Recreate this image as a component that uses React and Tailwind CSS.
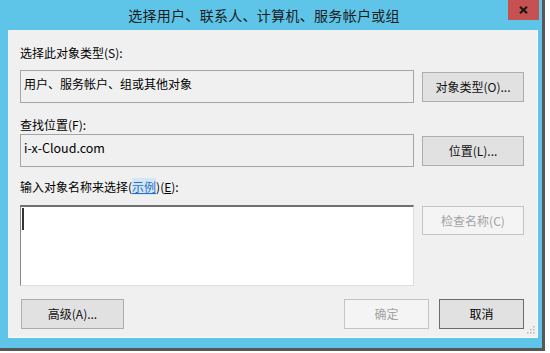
import React from 'react'

const font = "font-['Noto_Sans_CJK_SC','Noto_Sans',sans-serif]"

function Btn({ children, className = '', disabled, primary }) {
  let look = 'bg-[#e1e1e1] border-[#adadad] text-[#111]'
  if (disabled) look = 'bg-[#f4f4f4] border-[#c4c4c4] text-[#a3a3a3]'
  if (primary) look = 'bg-[#e1e1e1] border-[#6b6b6b] text-[#000]'
  return (
    <div
      className={`flex items-center justify-center border text-[12px] leading-[16px] ${look} ${className}`}
    >
      {children}
    </div>
  )
}

function Grip() {
  return (
    <svg width="8" height="8" viewBox="0 0 8 8" className="absolute right-[2px] bottom-[3px]">
      {[
        [6, 0],
        [6, 3],
        [3, 3],
        [6, 6],
        [3, 6],
        [0, 6],
      ].map(([x, y], i) => (
        <rect key={i} x={x} y={y} width="1.5" height="1.5" fill="#b9b9b9" />
      ))}
    </svg>
  )
}

export default function App() {
  return (
    <div className={`w-[550px] h-[353px] bg-white ${font}`}>
      <div className="w-[545px] h-[351px] border-r-[3px] border-b-[3px] border-[#575757]">
        <div className="w-[542px] h-[348px] bg-[#5ec5e9] pl-[8px] pr-[4px] flex flex-col">
          {/* title bar */}
          <div className="h-[30px] flex">
            <div className="flex-1 flex justify-center pl-[12px] pt-[4px]">
              <span className="text-[14px] tracking-[0.3px] leading-[22px] text-[#1b1b1b]">
                选择用户、联系人、计算机、服务帐户或组
              </span>
            </div>
            <div className="w-[31px] h-[20px] bg-[#c75050] flex items-center justify-center -mr-[1px]">
              <svg width="9" height="8" viewBox="0 0 9 8">
                <path d="M1 0.8 L8 7.2 M8 0.8 L1 7.2" stroke="#1a1a1a" strokeWidth="2.2" />
              </svg>
            </div>
          </div>

          {/* client area */}
          <div className="relative h-[308px] bg-[#f0f0f0] border-r border-b border-[#fbfbfb] pl-[12px] pr-[13px] pt-[15px] flex flex-col text-[12px] leading-[16px] text-black">
            <div className="h-[16px]">选择此对象类型(S):</div>
            <div className="mt-[9px] flex gap-[8px]">
              <div className="w-[394px] h-[33px] border border-[#a5a5a5] pl-[3px] pt-[5px]">
                用户、服务帐户、组或其他对象
              </div>
              <Btn className="w-[102px] h-[30px] mt-[2px]">对象类型(O)...</Btn>
            </div>

            <div className="mt-[14px] h-[16px]">查找位置(F):</div>
            <div className="mt-[1px] flex gap-[8px]">
              <div className="w-[394px] h-[33px] border border-[#a5a5a5] pl-[3px] pt-[5px] text-[12.5px]">
                i-x-Cloud.com
              </div>
              <Btn className="w-[102px] h-[30px] mt-[2px]">位置(L)...</Btn>
            </div>

            <div className="mt-[12px] h-[16px]">
              输入对象名称来选择(
              <span className="bg-[#d3e6f6] text-[#2a6fc4] underline">示例</span>
              )(<span className="underline">E</span>):
            </div>
            <div className="mt-[10px] flex gap-[8px]">
              <div className="w-[394px] h-[81px] bg-white border-t-2 border-l-[1.5px] border-r border-b border-t-[#6f6f6f] border-l-[#8a8a8a] border-r-[#dedede] border-b-[#dedede] pl-[1px] pt-[1px]">
                <div className="w-[1.5px] h-[22px] bg-[#333]" />
              </div>
              <Btn disabled className="w-[102px] h-[29px] mt-[1px]">
                检查名称(C)
              </Btn>
            </div>

            <div className="mt-[13px] flex">
              <Btn className="w-[103px] h-[30px] ml-[1px]">高级(A)...</Btn>
              <div className="flex-1" />
              <Btn disabled className="w-[85px] h-[30px]">
                确定
              </Btn>
              <Btn primary className="w-[85px] h-[30px] ml-[10px]">
                取消
              </Btn>
            </div>
            <Grip />
          </div>
        </div>
      </div>
    </div>
  )
}
